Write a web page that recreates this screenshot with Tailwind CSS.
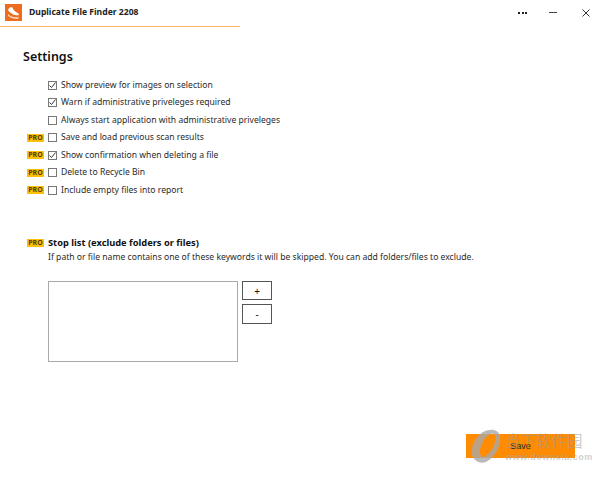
<!DOCTYPE html>
<html lang="en">
<head>
<meta charset="UTF-8" />
<title>Duplicate File Finder 2208</title>
<script src="https://cdn.jsdelivr.net/npm/@tailwindcss/browser@4"></script>
</head>
<body class="bg-white">
<div class="relative w-[600px] h-[477px] overflow-hidden bg-white text-[#2a2a2a] font-['Noto_Sans','Liberation_Sans',sans-serif] text-[8.6px]">
  <!-- title bar -->
  <header class="flex justify-between h-[27px]">
    <div class="flex items-center w-[240px] h-[27px] border-b border-solid border-b-[#fdb55a] pl-[5px] pb-[2px]">
      <svg class="w-[17px] h-[17px]" viewBox="0 0 17 17"><rect width="17" height="17" fill="#ee6c1f"/><path d="M3 6 Q4 3 7 3 Q8 6 11 8 Q14 9 14 11 Q9 12 6 9 Q4 8 3 6 Z" fill="#fff"/><path d="M3 10 Q7 14 14 13 L13 15 Q7 15 3 12 Z" fill="#fbd9bf"/></svg>
      <span class="ml-[7px] font-bold text-[#222]">Duplicate File Finder 2208</span>
    </div>
    <div class="flex items-center pr-[10px] h-[25px]">
      <div class="flex gap-[1.5px] mr-[22px]"><i class="w-[2px] h-[2px] bg-[#222]"></i><i class="w-[2px] h-[2px] bg-[#222]"></i><i class="w-[2px] h-[2px] bg-[#222]"></i></div>
      <div class="w-[8px] h-[1px] bg-[#444] mr-[25px]"></div>
      <svg class="w-[8px] h-[8px]" viewBox="0 0 8 8"><path d="M.5.5l7 7M7.5.5l-7 7" stroke="#333" fill="none"/></svg>
    </div>
  </header>

  <main class="pl-[27px] pt-[21px]">
    <h1 class="-ml-[4px] text-[12.5px] leading-[18px] font-semibold text-[#111]">Settings</h1>

    <ul class="mt-[10.25px] flex flex-col">
      <li class="flex items-center h-[17.5px]">
        <span class="w-[21px]"></span>
        <span class="w-[9px] h-[9px] border border-[#777] flex items-center justify-center"><svg class="w-[7px] h-[7px] shrink-0" viewBox="0 0 7 7"><path d="M.5 3.5l2 2 4-5" stroke="#333" fill="none"/></svg></span>
        <span class="ml-[4px]">Show preview for images on selection</span>
      </li>
      <li class="flex items-center h-[17.5px]">
        <span class="w-[21px]"></span>
        <span class="w-[9px] h-[9px] border border-[#777] flex items-center justify-center"><svg class="w-[7px] h-[7px] shrink-0" viewBox="0 0 7 7"><path d="M.5 3.5l2 2 4-5" stroke="#333" fill="none"/></svg></span>
        <span class="ml-[4px]">Warn if administrative priveleges required</span>
      </li>
      <li class="flex items-center h-[17.5px]">
        <span class="w-[21px]"></span>
        <span class="w-[9px] h-[9px] border border-[#777]"></span>
        <span class="ml-[4px]">Always start application with administrative priveleges</span>
      </li>
      <li class="flex items-center h-[17.5px]">
        <span class="w-[17px] h-[8px] mr-[4px] bg-[#fdc008] text-[7px] leading-[8px] font-bold text-center text-[#5a3d00]">PRO</span>
        <span class="w-[9px] h-[9px] border border-[#777]"></span>
        <span class="ml-[4px]">Save and load previous scan results</span>
      </li>
      <li class="flex items-center h-[17.5px]">
        <span class="w-[17px] h-[8px] mr-[4px] bg-[#fdc008] text-[7px] leading-[8px] font-bold text-center text-[#5a3d00]">PRO</span>
        <span class="w-[9px] h-[9px] border border-[#777] flex items-center justify-center"><svg class="w-[7px] h-[7px] shrink-0" viewBox="0 0 7 7"><path d="M.5 3.5l2 2 4-5" stroke="#333" fill="none"/></svg></span>
        <span class="ml-[4px]">Show confirmation when deleting a file</span>
      </li>
      <li class="flex items-center h-[17.5px]">
        <span class="w-[17px] h-[8px] mr-[4px] bg-[#fdc008] text-[7px] leading-[8px] font-bold text-center text-[#5a3d00]">PRO</span>
        <span class="w-[9px] h-[9px] border border-[#777]"></span>
        <span class="ml-[4px]">Delete to Recycle Bin</span>
      </li>
      <li class="flex items-center h-[17.5px]">
        <span class="w-[17px] h-[8px] mr-[4px] bg-[#fdc008] text-[7px] leading-[8px] font-bold text-center text-[#5a3d00]">PRO</span>
        <span class="w-[9px] h-[9px] border border-[#777]"></span>
        <span class="ml-[4px]">Include empty files into report</span>
      </li>
    </ul>

    <section class="mt-[37.25px]">
      <div class="flex items-center h-[14px]">
        <span class="w-[17px] h-[8px] mr-[4px] bg-[#fdc008] text-[7px] leading-[8px] font-bold text-center text-[#5a3d00]">PRO</span>
        <span class="font-bold text-[9.3px] text-[#111]">Stop list (exclude folders or files)</span>
      </div>
      <p class="ml-[21px] h-[14px] leading-[14px] whitespace-nowrap">If path or file name contains one of these keywords it will be skipped. You can add folders/files to exclude.</p>
      <div class="ml-[21px] mt-[17px] flex items-start gap-[4px]">
        <div class="w-[190px] h-[81px] border border-[#a9a9a9]"></div>
        <div class="flex flex-col gap-[4px]">
          <button class="w-[30px] h-[19px] border border-[#555] leading-none text-[#111] text-[10px]">+</button>
          <button class="w-[30px] h-[20px] border border-[#555] leading-none text-[#111] text-[10px]">-</button>
        </div>
      </div>
    </section>

    <div class="flex justify-end mt-[72px] pr-[25px]">
      <button class="w-[109px] h-[24px] pt-[2px] bg-[#ff8c00] text-[#222] font-['Liberation_Sans',sans-serif] text-[9px]">Save</button>
    </div>
  </main>

  <!-- watermark over the save button -->
  <svg class="absolute left-[468px] top-[428px] w-[36px] h-[38px]" viewBox="0 0 36 38"><path fill-rule="evenodd" fill="#a8a8a8" fill-opacity="0.8" d="M5 29C1 21 7 9 15 4C23 0 31 1 32 9C33 17 27 30 18 34C12 36 7 33 5 29ZM13 28C15 31 20 27 24 21C28 14 29 8 26 6C23 4 18 8 15 14C12 19 11 24 13 28Z"/></svg>
  <div class="absolute left-[505px] top-[432px] text-[15.5px] leading-[17px] text-[#9a9a9a]/55 whitespace-nowrap font-['Noto_Sans_CJK_SC',sans-serif]">当下软件园</div>
  <div class="absolute left-[505px] top-[452px] text-[9px] leading-[10px] tracking-[0.5px] font-bold text-[#a5a5a5]/55 whitespace-nowrap font-['Liberation_Sans',sans-serif]">www.downxia.com</div>
</div>
</body>
</html>
